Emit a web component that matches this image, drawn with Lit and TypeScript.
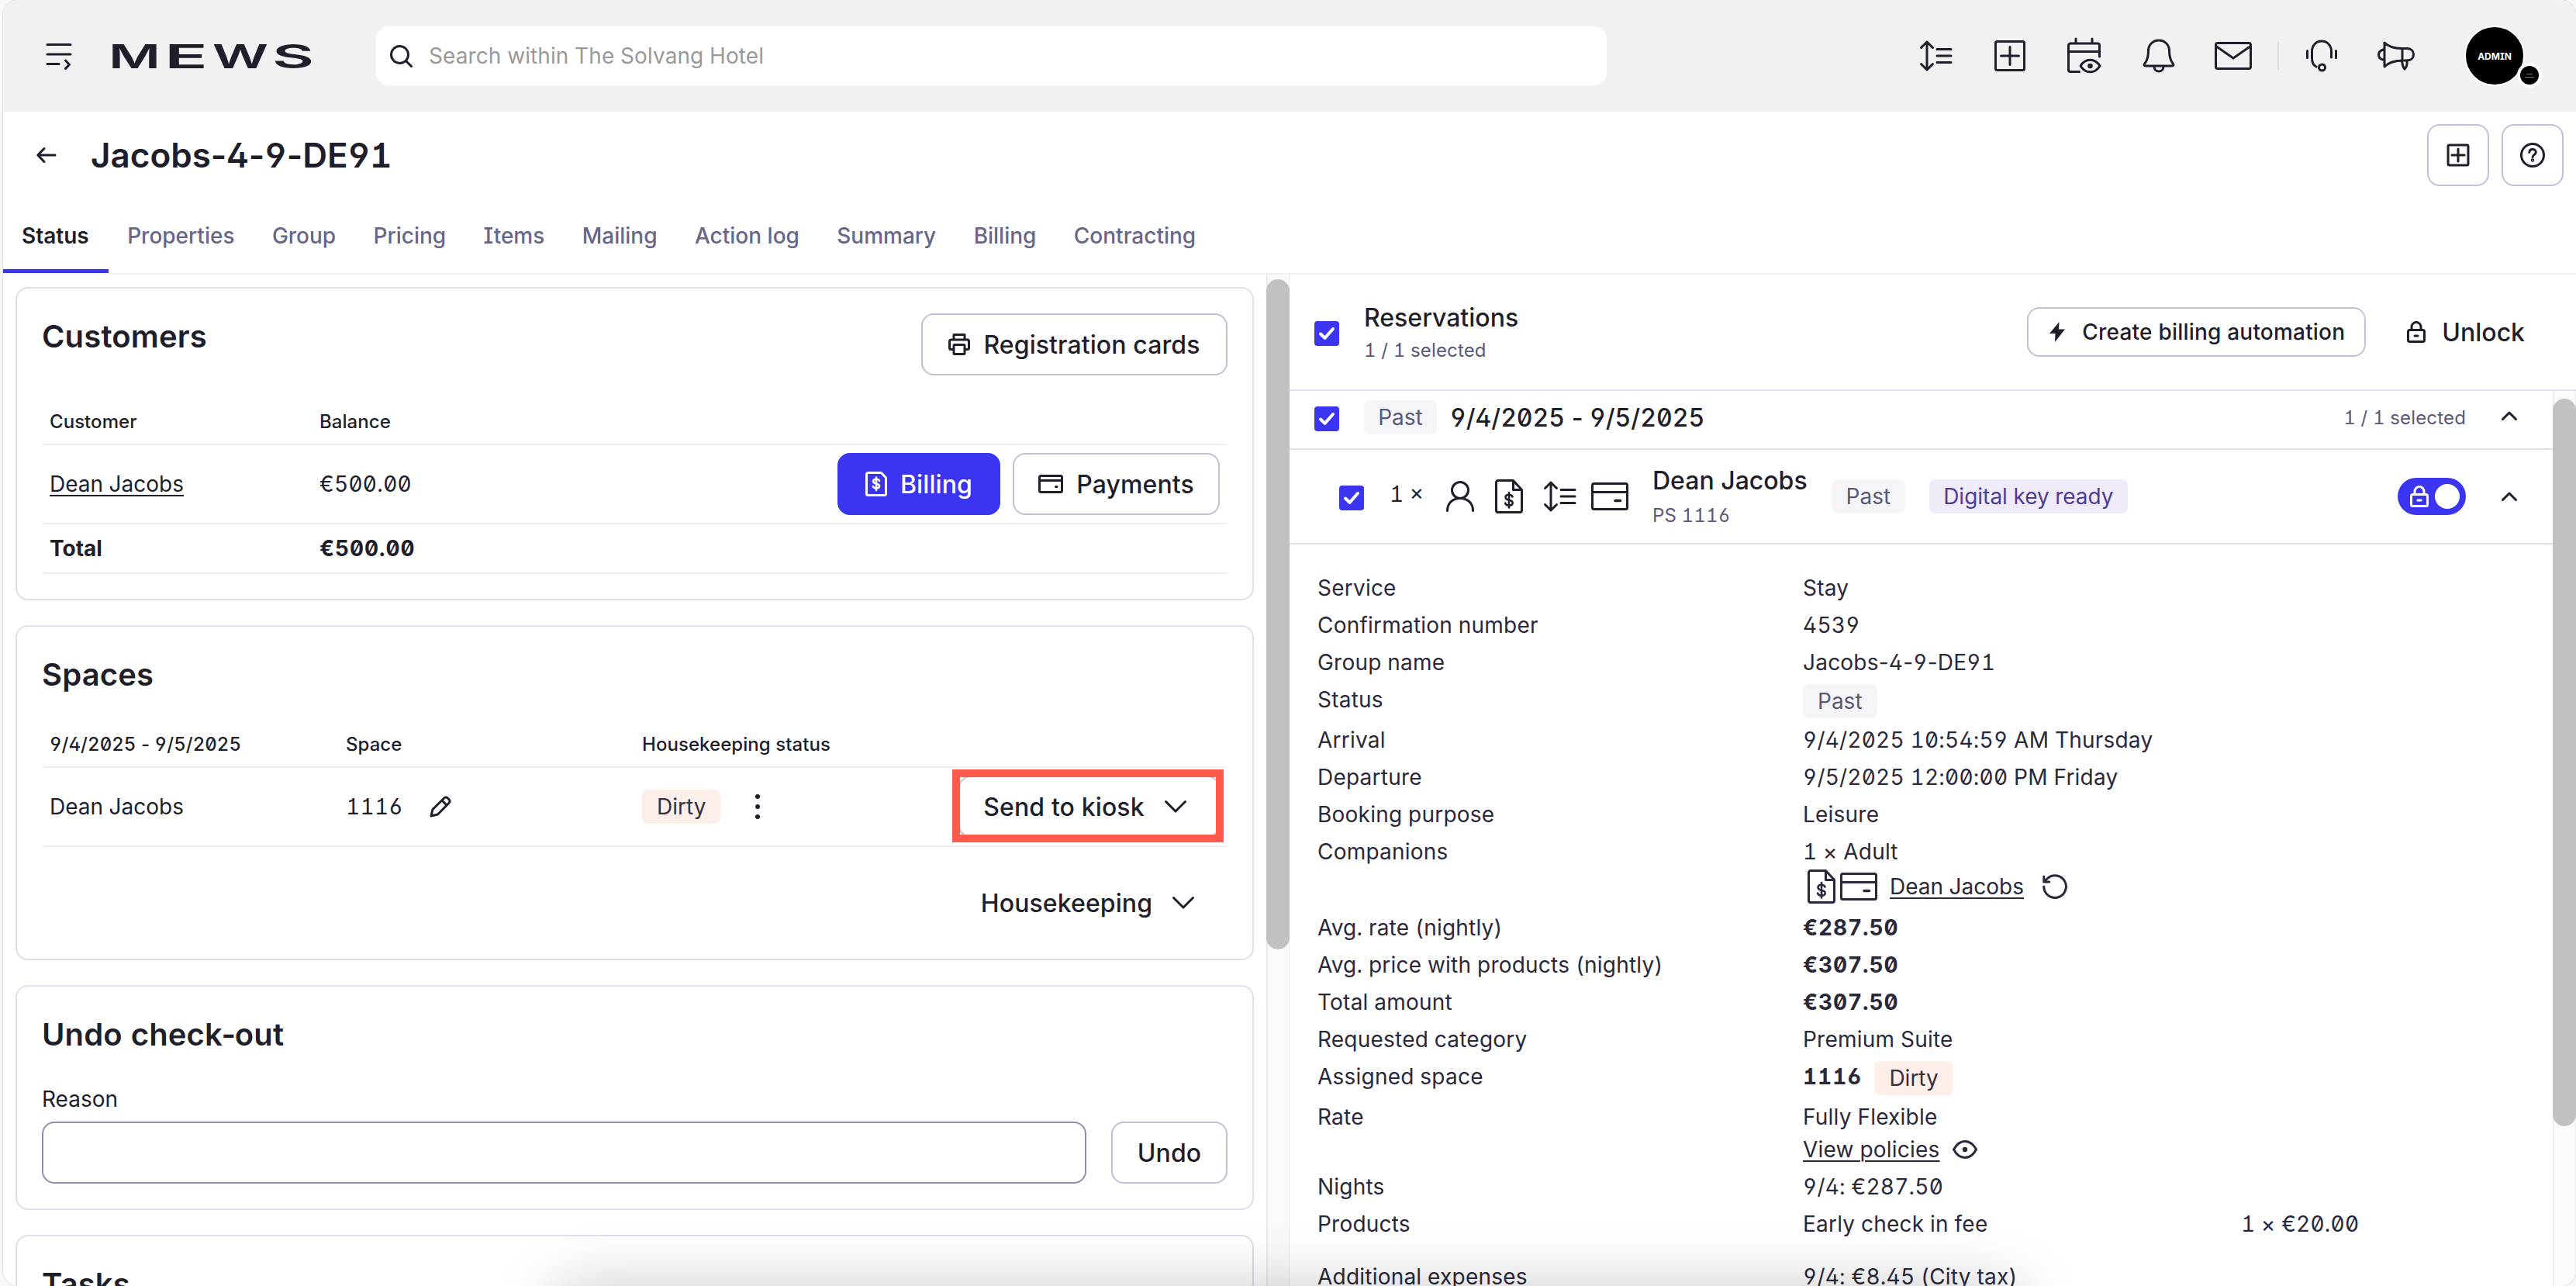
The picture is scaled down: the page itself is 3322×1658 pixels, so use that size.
import { LitElement, html, css, svg, nothing, TemplateResult, SVGTemplateResult } from "lit";
import { customElement, property } from "lit/decorators.js";
import { classMap } from "lit/directives/class-map.js";

type Glyph = [w: number, h: number, stroke: number, body: SVGTemplateResult];

const LOCK = svg`<rect x="1.5" y="11.5" width="21" height="15" rx="2"/><path d="M6 11V7.5a6 6 0 0 1 12 0V11M10 19h4"/>`;
const BILL = svg`<path d="M23.500 1.500H4a2.500 2.500 0 0 0-2.500 2.500v36A2.500 2.500 0 0 0 4 42.500h28a2.500 2.500 0 0 0 2.500-2.500V13.500zM23.500 2v11.500H34"/><path stroke-width="2.600" d="M22.500 22.500c-.6-1.700-2.300-2.700-4.500-2.700-2.600 0-4.500 1.300-4.500 3.400 0 4.800 9.200 2.200 9.200 7 0 2.200-2 3.500-4.700 3.500-2.400 0-4.300-1-4.900-3M18 17v19.500"/>`;
const WALLET = svg`<rect x="1.500" y="1.500" width="45" height="33" rx="2"/><path d="M2 12.500h44"/><path stroke-width="3.500" d="M31 23.500h6.500"/>`;

const ICONS: Record<string, Glyph> = {
  menu: [32, 34, 3, svg`<path d="M1 2.500h30M1 15h30M1 27.500h15M24.500 23l5 5.200-5 5.200"/>`],
  search: [28, 28, 3, svg`<circle cx="12.500" cy="12.500" r="11"/><path d="M20.500 20.500l7 7"/>`],
  sort: [41, 40, 3, svg`<path d="M9 2v36M1.500 9.500L9 2l7.500 7.500M1.500 30.500L9 38l7.500-7.500M22 11.500h18M22 20h18M22 28.500h18"/>`],
  plus: [40, 40, 3, svg`<rect x="1.500" y="1.500" width="37" height="37" rx="2"/><path d="M20 8.500v23M8.500 20h23"/>`],
  calendar: [44, 46, 3, svg`<path d="M15.500 43.500H4A2.500 2.500 0 0 1 1.500 41V9.500A2.500 2.500 0 0 1 4 7h35a2.500 2.500 0 0 1 2.500 2.500V24M2 17.500h39M11 1v6M32 1v6"/><path d="M17 36c3-5 7.500-7.800 12.500-7.800S39 31 42 36c-3 5-7.500 7.800-12.500 7.800S20 41 17 36z"/><circle cx="29.500" cy="36" r="1.800"/>`],
  bell: [42, 44, 3, svg`<path d="M21 2c-8 0-13.500 6-13.500 13.500 0 9-1.500 12.500-4.700 16.500-1.300 1.700-.6 3 1.200 3h34c1.800 0 2.500-1.300 1.200-3-3.200-4-4.700-7.500-4.700-16.500C34.500 8 29 2 21 2zM15 35.500c0 4 2.600 6.500 6 6.500s6-2.500 6-6.500"/>`],
  mail: [48, 36, 3, svg`<rect x="1.500" y="1.500" width="45" height="33" rx="2.500"/><path d="M2.500 6L24 21 45.500 6"/>`],
  headset: [40, 42, 3, svg`<path d="M7.500 24V15C7.500 7.500 13 2 20 2s12.500 5.500 12.500 13v8M7.500 24c0 6 1.500 9 5.500 11M1.500 14.500v9M38.500 14.500v9"/><circle cx="20.500" cy="36" r="4"/>`],
  megaphone: [48, 38, 3, svg`<path d="M9 2c5 5 12 7.500 22 7.500h7c5 0 8.500 3 8.500 7.800s-3.500 7.700-8.500 7.700h-5C22 25 14 28 9 33zM9 11H7c-3.500 1.500-5.500 3.500-5.500 6.500S3.500 23 7 24h2M32 9.500V25M31.500 25.500c.5 5 1.500 8 3.500 10.500 2.500-2 3.500-5.500 3-11"/>`],
  back: [25, 20, 3, svg`<path d="M24 10H2M10 1.500L1.800 10l8.200 8.500"/>`],
  help: [32, 32, 3, svg`<circle cx="16" cy="16" r="14.500"/><path d="M11.800 12.500c.2-2.500 1.900-4 4.300-4s4.200 1.500 4.200 3.700c0 3.200-4.200 3.200-4.200 6.300"/><circle cx="16" cy="22.500" r=".8"/>`],
  printer: [28, 28, 3, svg`<path d="M7 8V1.500h14V8M6.500 20.500h-3a2 2 0 0 1-2-2V10a2 2 0 0 1 2-2h21a2 2 0 0 1 2 2v8.500a2 2 0 0 1-2 2h-3"/><rect x="7" y="14.500" width="14" height="12" rx="1"/>`],
  billSmall: [28, 32, 3, svg`<path d="M20.500 1.500H3.500a2 2 0 0 0-2 2v25a2 2 0 0 0 2 2h21a2 2 0 0 0 2-2V8z"/><path stroke-width="2.500" d="M18 12c-.5-1.400-2-2.200-3.900-2.200-2.300 0-4 1.100-4 2.900 0 4 8 2 8 5.800 0 1.900-1.700 3-4.100 3-2.100 0-3.700-.9-4.200-2.500M14 7.500v16.500"/>`],
  walletSmall: [32, 24, 3, svg`<rect x="1.500" y="1.500" width="29" height="21" rx="2"/><path d="M2 7.500h28M22.500 15.500h1.500"/>`],
  pencil: [28, 28, 3, svg`<path d="M2 26l2-8.500L19 2.800a2.900 2.900 0 0 1 4.100 0l2.100 2.100a2.900 2.900 0 0 1 0 4.100L10.500 24zM16 6l6 6"/>`],
  down: [28, 16, 3, svg`<path d="M1.500 1.500L14 14 26.500 1.500"/>`],
  up: [20, 12, 3, svg`<path d="M1.500 10.500L10 2l8.500 8.500"/>`],
  bolt: [20, 26, 0, svg`<path fill="currentColor" d="M12.500 0L0 15h7.500L7 26l13-16.500h-8z"/>`],
  lock: [24, 28, 3, LOCK],
  person: [36, 40, 3, svg`<ellipse cx="18" cy="12" rx="10.500" ry="10.500"/><path d="M1.500 38.500C1.500 29 8 22.500 18 22.500S34.500 29 34.500 38.500"/>`],
  bill: [36, 44, 3, BILL],
  wallet: [48, 36, 3, WALLET],
  refresh: [32, 32, 3, svg`<path d="M1.800 16A14.300 14.300 0 1 0 6.500 5.500L2 9.500M1.800 3v7h7"/>`],
  eye: [32, 24, 3, svg`<path d="M1.500 12C5 5.500 10 1.500 16 1.500S27 5.500 30.500 12C27 18.500 22 22.500 16 22.500S5 18.500 1.500 12z"/><circle cx="16" cy="12" r="3.200" fill="currentColor" stroke="none"/>`],
  check: [20, 16, 4, svg`<path d="M2 8.500l5.500 5.300L18 2"/>`],
};

function icon(name: string, scale = 1) {
  const [w, h, stroke, body] = ICONS[name];
  return html`<svg
    width=${w * scale} height=${h * scale} viewBox="0 0 ${w} ${h}" fill="none"
    stroke=${stroke ? "currentColor" : "none"} stroke-width=${stroke / scale}
    stroke-linecap="round" stroke-linejoin="round"
  >${body}</svg>`;
}

// Tabular figures also widen the hyphen, so it gets its proportional width back.
function figures(text: string) {
  return text.split("-").map((part, i) => (i ? html`<span class="hyphen">-</span>${part}` : part));
}

const shared = css`
  * { box-sizing: border-box; }
  svg { display: block; flex: none; overflow: visible; }
  .hyphen { font-feature-settings: "tnum" 0; }
  .link { text-decoration: underline; text-decoration-thickness: 2px; text-underline-offset: 4px; }
  .tag {
    display: inline-flex;
    align-items: center;
    justify-content: center;
    height: 44px;
    padding: 0 19px;
    border-radius: 8px;
    background: #f5f5f8;
    color: #5a5878;
    white-space: nowrap;
  }
  .tag.dirty { background: #fdeeea; color: #33303f; }
  .tag.key { background: #efebf8; color: #4f3d96; }
  .spacer { flex: 1; }
  .scrollbar {
    flex: none;
    width: 30px;
    background: #fafafa;
    border-left: 2px solid #ececec;
    border-right: 1px solid #ececec;
  }
  .thumb { width: 30px; margin-left: -2px; border-radius: 15px; background: #c1c1c1; }
`;

@customElement("ui-button")
export class UiButton extends LitElement {
  @property() icon = "";
  @property() kind = "outline";

  static styles = [shared, css`
    :host { display: block; flex: none; }
    .btn {
      display: flex;
      align-items: center;
      justify-content: center;
      gap: 17px;
      height: 80px;
      width: 100%;
      padding: 0;
      border: 2px solid #c1c0d8;
      border-radius: 16px;
      background: #fff;
      color: #1f1e2b;
      font: inherit;
      font-size: 32px;
      font-weight: 500;
      letter-spacing: 0.1px;
      font-feature-settings: inherit;
      white-space: nowrap;
    }
    .btn.primary { background: #3b35f1; border-color: #3b35f1; color: #fff; }
    .btn.ghost { border-color: transparent; background: none; }
    .btn.small { height: 64px; padding-left: 2px; font-size: 28px; gap: 22px; letter-spacing: 0.2px; }
    .btn.menu { gap: 26px; padding-right: 11px; }
  `];

  render() {
    const glyph = this.icon ? icon(this.icon) : nothing;
    const trailing = this.icon === "down";
    return html`
      <button class=${classMap({ btn: true, [this.kind]: true, menu: trailing })}>
        ${trailing ? nothing : glyph}<slot></slot>${trailing ? glyph : nothing}
      </button>
    `;
  }
}

@customElement("ui-checkbox")
export class UiCheckbox extends LitElement {
  static styles = [shared, css`
    :host {
      display: flex;
      flex: none;
      align-items: center;
      justify-content: center;
      width: 32px;
      height: 32px;
      border-radius: 4px;
      background: #3b35f1;
      color: #fff;
    }
  `];

  render() {
    return icon("check");
  }
}

const TABS = [
  "Status", "Properties", "Group", "Pricing", "Items",
  "Mailing", "Action log", "Summary", "Billing", "Contracting",
];

// Letter, left edge and stretched advance of each wordmark letter.
const WORDMARK: [string, number, number][] = [
  ["M", -6, 67],
  ["E", 66, 56],
  ["W", 128, 72],
  ["S", 205, 54],
];

@customElement("top-bar")
export class TopBar extends LitElement {
  static styles = [shared, css`
    :host { display: block; }
    .bar {
      display: flex;
      align-items: center;
      height: 144px;
      padding: 0 47px 0 56px;
      background: #f1f1f1;
    }
    .logo { margin-left: 54px; }
    .logo text { font-family: Inter, sans-serif; font-size: 43px; font-weight: 600; fill: #1f1e2b; }
    .search {
      display: flex;
      align-items: center;
      gap: 22px;
      width: 1587px;
      height: 76px;
      margin-left: 83px;
      padding-left: 18px;
      border-radius: 16px;
      background: #fff;
    }
    .hint { color: #999; letter-spacing: 0.1px; }
    .tools { display: flex; align-items: center; }
    .tool { display: flex; justify-content: center; width: 96px; }
    .divider { width: 2px; height: 36px; margin: 0 7px 0 9px; background: #dddde9; }
    .avatar {
      position: relative;
      display: flex;
      align-items: center;
      justify-content: center;
      width: 78px;
      height: 78px;
      margin: 0 19px 0 40px;
      border: 2px solid #fff;
      border-radius: 50%;
      background: #000;
      color: #fff;
      font-size: 12px;
      font-weight: 700;
      letter-spacing: 0;
    }
    .badge {
      position: absolute;
      right: -24px;
      bottom: -4px;
      display: flex;
      flex-direction: column;
      align-items: center;
      justify-content: center;
      gap: 3px;
      width: 32px;
      height: 32px;
      border: 4px solid #fff;
      border-radius: 50%;
      background: #000;
    }
    .badge i { width: 8px; height: 1px; background: #777; }
    .badge i + i { width: 12px; }
  `];

  render() {
    const tool = (name: string) => html`<div class="tool">${icon(name)}</div>`;
    return html`
      <div class="bar">
        ${icon("menu")}
        <svg class="logo" width="256" height="32" viewBox="0 0 256 32">
          ${WORDMARK.map(([letter, x, w]) => svg`<text
            x=${x} y="32" textLength=${w} lengthAdjust="spacingAndGlyphs">${letter}</text>`)}
        </svg>
        <div class="search">${icon("search")}<span class="hint">Search within The Solvang Hotel</span></div>
        <div class="spacer"></div>
        <div class="tools">
          ${["sort", "plus", "calendar", "bell", "mail"].map(tool)}
          <div class="divider"></div>
          ${["headset", "megaphone"].map(tool)}
        </div>
        <div class="avatar">ADMIN<div class="badge"><i></i><i></i></div></div>
      </div>
    `;
  }
}

@customElement("status-panel")
export class StatusPanel extends LitElement {
  static styles = [shared, css`
    :host { display: flex; flex: none; width: 1659px; overflow: hidden; }
    .cards {
      display: flex;
      flex-direction: column;
      flex: 1;
      gap: 32px;
      padding: 16px 16px 0;
    }
    .card {
      flex: none;
      padding: 32px;
      border: 2px solid #e0deea;
      border-radius: 16px;
    }
    .customers { height: 404px; }
    .spaces { height: 432px; }
    .undo { height: 290px; }
    .tasks { height: 200px; }
    .head { display: flex; justify-content: space-between; height: 60px; }
    h2 { margin: 0; font-size: 40px; line-height: 60px; font-weight: 600; letter-spacing: 0.15px; }
    h2 .hyphen { margin: 0 -1.5px; }
    .row { display: grid; align-items: center; padding: 0 10px; border-bottom: 2px solid #efeef5; }
    .customers .row { grid-template-columns: 348px 1fr auto; }
    .spaces .row { grid-template-columns: 382px 382px 1fr auto; padding-right: 0; }
    .customers .th { height: 62px; margin-top: 48px; }
    .spaces .th { height: 62px; margin-top: 28px; }
    .th { padding-top: 2px; font-size: 24px; font-weight: 500; letter-spacing: 0.05px; }
    .td { height: 102px; }
    .money { letter-spacing: 0.3px; }
    .total { height: 64px; font-weight: 700; }
    .total .money { letter-spacing: 0.9px; }
    .actions { display: flex; gap: 16px; }
    .reg { width: 395px; }
    .bill { width: 210px; }
    .pay { width: 267px; }
    .inline { display: flex; align-items: center; }
    .inline svg { margin-left: 34px; }
    .room { letter-spacing: 0.3px; }
    .dots { display: grid; gap: 7px; margin-left: 45px; }
    .dots i { width: 6px; height: 6px; border-radius: 50%; background: #1f1e2b; }
    .target { position: relative; width: 337px; margin-right: 10px; }
    .target::after {
      content: "";
      position: absolute;
      inset: -8px -5px -6px -8px;
      border: 10px solid #ff5a4c;
    }
    .house { display: flex; justify-content: flex-end; margin-top: 32px; }
    .house ui-button { width: 350px; }
    .reason { margin-top: 28px; height: 50px; line-height: 50px; }
    .form { display: flex; gap: 32px; margin-top: 4px; }
    .field { flex: 1; height: 80px; border: 2px solid #8f8db0; border-radius: 16px; }
    .form ui-button { width: 150px; }
    .scrollbar { padding-top: 6px; }
    .thumb { height: 864px; }
  `];

  render() {
    return html`
      <div class="cards">
        <section class="card customers">
          <div class="head">
            <h2>Customers</h2>
            <ui-button class="reg" icon="printer">Registration cards</ui-button>
          </div>
          <div class="row th"><span>Customer</span><span>Balance</span></div>
          <div class="row td">
            <span><span class="link">Dean Jacobs</span></span><span class="money">€500.00</span>
            <div class="actions">
              <ui-button class="bill" icon="billSmall" kind="primary">Billing</ui-button>
              <ui-button class="pay" icon="walletSmall">Payments</ui-button>
            </div>
          </div>
          <div class="row total"><span>Total</span><span class="money">€500.00</span></div>
        </section>

        <section class="card spaces">
          <div class="head"><h2>Spaces</h2></div>
          <div class="row th">
            <span>${figures("9/4/2025 - 9/5/2025")}</span><span>Space</span><span>Housekeeping status</span>
          </div>
          <div class="row td">
            <span>Dean Jacobs</span>
            <span class="inline room">1116${icon("pencil")}</span>
            <span class="inline">
              <span class="tag dirty">Dirty</span>
              <span class="dots"><i></i><i></i><i></i></span>
            </span>
            <div class="target"><ui-button icon="down">Send to kiosk</ui-button></div>
          </div>
          <div class="house"><ui-button icon="down" kind="ghost">Housekeeping</ui-button></div>
        </section>

        <section class="card undo">
          <div class="head"><h2>${figures("Undo check-out")}</h2></div>
          <div class="reason">Reason</div>
          <div class="form"><div class="field"></div><ui-button>Undo</ui-button></div>
        </section>

        <section class="card tasks"><div class="head"><h2>Tasks</h2></div></section>
      </div>
      <div class="scrollbar"><div class="thumb"></div></div>
    `;
  }
}

interface Detail {
  label: string;
  value: TemplateResult | string;
  height?: number;
  bold?: boolean;
  extra?: string;
}

const DETAILS: Detail[] = [
  { label: "Service", value: "Stay" },
  { label: "Confirmation number", value: "4539" },
  { label: "Group name", value: html`${figures("Jacobs-4-9-DE91")}` },
  { label: "Status", value: html`<span class="tag">Past</span>`, height: 52 },
  { label: "Arrival", value: "9/4/2025 10:54:59 AM Thursday" },
  { label: "Departure", value: "9/5/2025 12:00:00 PM Friday" },
  { label: "Booking purpose", value: "Leisure" },
  {
    label: "Companions",
    value: html`1 × Adult
      <div class="companion">
        ${icon("bill")}${icon("wallet")}<span class="link">Dean Jacobs</span>${icon("refresh")}
      </div>`,
    height: 98,
  },
  { label: "Avg. rate (nightly)", value: "€287.50", bold: true },
  { label: "Avg. price with products (nightly)", value: "€307.50", bold: true },
  { label: "Total amount", value: "€307.50", bold: true },
  { label: "Requested category", value: "Premium Suite" },
  { label: "Assigned space", value: html`<b>1116</b><span class="tag dirty">Dirty</span>`, height: 52 },
  {
    label: "Rate",
    value: html`Fully Flexible
      <div class="policies"><span class="link">View policies</span>${icon("eye")}</div>`,
    height: 90,
  },
  { label: "Nights", value: "9/4: €287.50" },
  { label: "Products", value: "Early check in fee", extra: "1 × €20.00", height: 68 },
  { label: "Additional expenses", value: "9/4: €8.45 (City tax)" },
];

@customElement("reservation-panel")
export class ReservationPanel extends LitElement {
  static styles = [shared, css`
    :host { display: flex; flex-direction: column; flex: 1; overflow: hidden; }
    .head {
      display: flex;
      align-items: center;
      flex: none;
      height: 150px;
      padding: 0 66px 0 32px;
      border-bottom: 2px solid #e0deea;
    }
    .head ui-checkbox { margin-top: 4px; }
    .stack { display: flex; flex-direction: column; line-height: 42px; font-size: 32px; font-weight: 500; }
    .head .stack { margin: 5px 0 0 32px; }
    small { font-size: 24px; font-weight: 400; color: #5a5878; letter-spacing: 0.15px; }
    .auto { width: 437px; margin-right: 53px; }
    .unlock {
      display: flex;
      align-items: center;
      gap: 21px;
      font-size: 32px;
      font-weight: 500;
    }
    .body { display: flex; flex: 1; min-height: 0; }
    .list { flex: 1; min-width: 0; }
    .group, .reservation { display: flex; align-items: center; border-bottom: 2px solid #e0deea; }
    .group { height: 76px; padding: 0 46px 6px 32px; }
    .group ui-checkbox { margin-top: 4px; }
    .group .tag { margin-left: 32px; margin-right: 17px; padding: 0; width: 94px; }
    .dates { font-size: 32px; font-weight: 500; }
    .group small { margin-right: 46px; }
    .group svg { margin-top: -4px; }
    .reservation { height: 122px; padding: 0 46px 0 64px; }
    .reservation ui-checkbox { margin-top: 4px; }
    .count { width: 106px; padding: 0 0 7px 33px; }
    .glyphs { display: flex; align-items: center; gap: 27px; }
    .glyphs .narrow { margin-left: -7px; }
    .reservation .stack { margin: 6px 31px 0 31px; line-height: 44px; }
    .reservation .stack small { line-height: 46px; }
    .reservation .key { margin-left: 31px; padding: 0 18px; }
    .switch {
      display: flex;
      align-items: center;
      justify-content: space-between;
      width: 88px;
      height: 48px;
      margin-right: 46px;
      padding: 0 8px 0 16px;
      border-radius: 24px;
      background: #3b35f1;
      color: #fff;
    }
    .knob { width: 32px; height: 32px; border-radius: 50%; background: #fff; }
    .details { padding: 34px 0 0 36px; color: #2a283a; letter-spacing: 0.22px; }
    .detail { display: grid; grid-template-columns: 626px 565px 1fr; line-height: 44px; height: 48px; }
    .detail.bold .value { font-weight: 700; letter-spacing: 0.9px; }
    b { margin-right: 16px; font-weight: 700; letter-spacing: 1px; }
    .value .tag { margin-top: 2px; vertical-align: top; letter-spacing: 0; }
    .companion { display: flex; align-items: center; gap: 6px; margin: 1px 0 0 6px; letter-spacing: 0; }
    .companion .link { margin: 0 18px 0 10px; }
    .policies { display: flex; align-items: center; gap: 16px; margin-top: -2px; }
    .body .thumb { height: 938px; }
    .body .scrollbar { padding-top: 10px; }
  `];

  private _detail(d: Detail) {
    return html`
      <div class=${classMap({ detail: true, bold: !!d.bold })} style=${d.height ? `height:${d.height}px` : ""}>
        <span>${d.label}</span>
        <div class="value">${d.value}</div>
        <span>${d.extra ?? ""}</span>
      </div>
    `;
  }

  render() {
    return html`
      <div class="head">
        <ui-checkbox></ui-checkbox>
        <div class="stack">Reservations<small>1 / 1 selected</small></div>
        <div class="spacer"></div>
        <ui-button class="auto" kind="small" icon="bolt">Create billing automation</ui-button>
        <div class="unlock">${icon("lock")}Unlock</div>
      </div>
      <div class="body">
        <div class="list">
          <div class="group">
            <ui-checkbox></ui-checkbox>
            <span class="tag">Past</span>
            <span class="dates">${figures("9/4/2025 - 9/5/2025")}</span>
            <div class="spacer"></div>
            <small>1 / 1 selected</small>
            ${icon("up")}
          </div>
          <div class="reservation">
            <ui-checkbox></ui-checkbox>
            <span class="count">1 ×</span>
            <div class="glyphs">
              ${icon("person")}${icon("bill")}${icon("sort")}
              <span class="narrow">${icon("wallet")}</span>
            </div>
            <div class="stack">Dean Jacobs<small>PS 1116</small></div>
            <span class="tag">Past</span>
            <span class="tag key">Digital key ready</span>
            <div class="spacer"></div>
            <div class="switch">${icon("lock")}<i class="knob"></i></div>
            ${icon("up")}
          </div>
          <div class="details">${DETAILS.map((d) => this._detail(d))}</div>
        </div>
        <div class="scrollbar"><div class="thumb"></div></div>
      </div>
    `;
  }
}

@customElement("app-root")
export class AppRoot extends LitElement {
  static styles = [shared, css`
    :host {
      display: block;
      height: 1658px;
      padding-left: 4px;
      overflow: hidden;
      position: relative;
      background: #f8f8f8;
      color: #1f1e2b;
      font-family: Inter, "Liberation Sans", sans-serif;
      font-size: 28px;
      font-feature-settings: "zero", "tnum", "cv01", "cv02", "cv03", "cv04", "cv08";
    }
    .window {
      display: flex;
      flex-direction: column;
      height: 1658px;
      overflow: hidden;
      border-radius: 20px;
      background: #fff;
      box-shadow: 0 0 0 1px #dedede;
    }
    .title { display: flex; align-items: center; flex: none; height: 112px; padding: 0 16px 0 43px; }
    h1 { margin: 0 0 0 45px; font-size: 44px; font-weight: 600; }
    .title ui-button { width: 80px; margin-left: 16px; }
    .tabs { display: flex; flex: none; height: 98px; border-bottom: 2px solid #efeff6; }
    .tab {
      display: flex;
      align-items: center;
      padding: 5px 24.4px 0 24px;
      border-bottom: 5px solid transparent;
      color: #68658a;
      font-weight: 500;
    }
    .tab.active { padding-right: 25.4px; color: #1f1e2b; font-weight: 600; border-color: #3b35f1; }
    .panes { display: flex; flex: 1; min-height: 0; }
    .shade {
      position: absolute;
      left: 720px;
      top: 1664px;
      width: 1880px;
      height: 400px;
      box-shadow: 0 0 80px rgba(0, 0, 0, 0.24);
    }
  `];

  render() {
    return html`
      <div class="window">
        <top-bar></top-bar>
        <div class="title">
          ${icon("back")}
          <h1>${figures("Jacobs-4-9-DE91")}</h1>
          <div class="spacer"></div>
          <ui-button>${icon("plus", 0.7)}</ui-button>
          <ui-button>${icon("help")}</ui-button>
        </div>
        <nav class="tabs">
          ${TABS.map((t, i) => html`<div class=${classMap({ tab: true, active: i === 0 })}>${t}</div>`)}
        </nav>
        <main class="panes">
          <status-panel></status-panel>
          <reservation-panel></reservation-panel>
        </main>
      </div>
      <div class="shade"></div>
    `;
  }
}
